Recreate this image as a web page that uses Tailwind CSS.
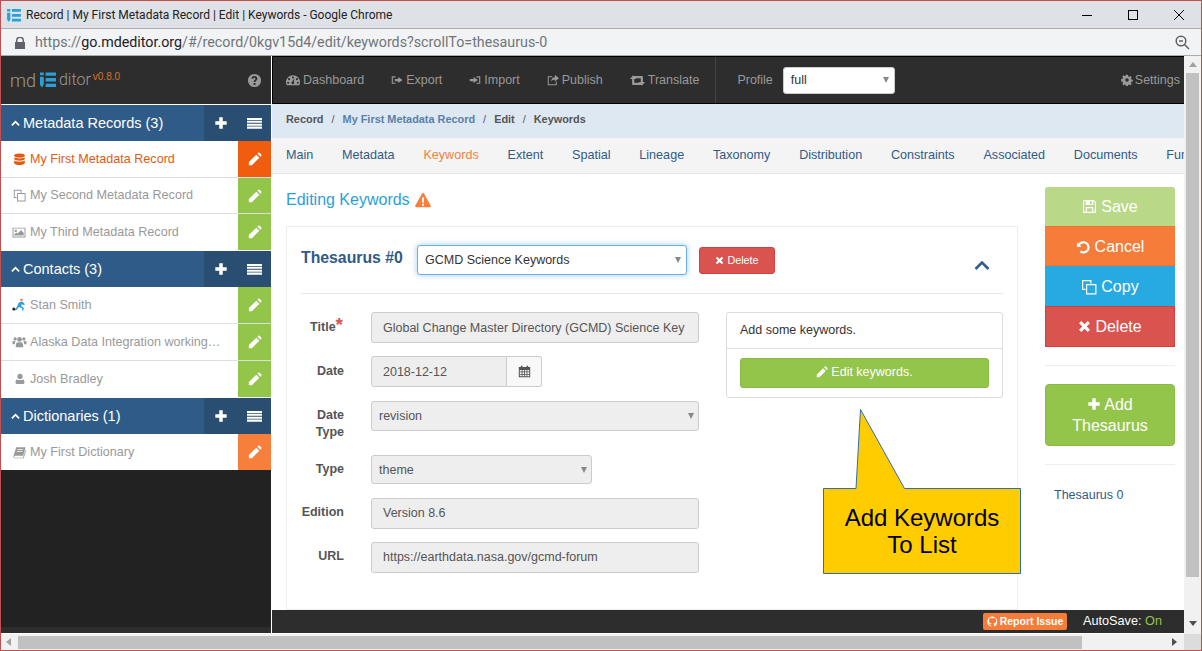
<!DOCTYPE html>
<html lang="en">
<head>
  <meta charset="UTF-8" />
  <title>Record | My First Metadata Record | Edit | Keywords</title>
  <script src="https://cdn.jsdelivr.net/npm/@tailwindcss/browser@4"></script>
</head>
<body class="bg-white font-['Liberation_Sans',sans-serif] overflow-hidden">
  <!-- icon sprites -->
  <svg class="hidden">
    <symbol id="i-pencil" viewBox="0 0 16 16"><path d="M1 11.500 9.500 3l3.500 3.500L4.500 15H1zM10.700 1.800l.8-.8a1.400 1.400 0 0 1 2 0l1.500 1.500a1.400 1.400 0 0 1 0 2l-.8.8z"/></symbol>
    <symbol id="i-plus" viewBox="0 0 16 16"><path d="M6 1.500h4V6h4.500v4H10v4.500H6V10H1.500V6H6z"/></symbol>
    <symbol id="i-list" viewBox="0 0 16 16"><path d="M0 2h16v2.200H0zM0 5.100h16v2.200H0zM0 8.200h16v2.200H0zM0 11.300h16v2.200H0z"/></symbol>
    <symbol id="i-db" viewBox="0 0 16 16"><ellipse cx="8" cy="3.200" rx="6.500" ry="2.500"/><path d="M1.500 5c1 2.400 12 2.400 13 0v2.500c-1 2.600-12 2.600-13 0zM1.500 9c1 2.400 12 2.400 13 0v3.500c-1 3-12 3-13 0z"/></symbol>
    <symbol id="i-copy" viewBox="0 0 16 16"><path fill-rule="evenodd" d="M1 1h9.500v3.500H9.300V2.200H2.200v7.600h2.300V11H1zM5 5h10.500v10.500H5zM6.200 6.200v8.100h8.100V6.200z"/></symbol>
    <symbol id="i-image" viewBox="0 0 16 16"><path fill-rule="evenodd" d="M0 2h16v12H0zM1.200 3.200v9.600h13.600V3.200zM4 4.500a1.500 1.500 0 1 1 0 3 1.500 1.500 0 0 1 0-3zM2.200 11.800V10l2.500-2 1.500 1.300L10.500 5l3.300 3.200v3.600z"/></symbol>
    <symbol id="i-users" viewBox="0 0 16 16"><circle cx="8" cy="5" r="2.700"/><circle cx="3" cy="4.500" r="1.900"/><circle cx="13" cy="4.500" r="1.900"/><path d="M4.500 9c1-1 6-1 7 0 .8.800.8 5 .8 5H3.700s0-4.200.8-5zM0 7.500c.5-.9 3-.9 3.700-.4-.8.700-1 2.600-1 3.400H0zM16 7.500c-.5-.9-3-.9-3.700-.4.800.7 1 2.600 1 3.400H16z"/></symbol>
    <symbol id="i-user" viewBox="0 0 16 16"><circle cx="8" cy="4.500" r="3.500"/><path d="M3.500 8.500c1.500 1.200 7.500 1.200 9 0 1 .5 1.500 2.500 1.500 4.500 0 1-.8 1.500-1.500 1.500h-9C2.800 14.500 2 14 2 13c0-2 .5-4 1.500-4.500z"/></symbol>
    <symbol id="i-book" viewBox="0 0 16 16"><path fill-rule="evenodd" d="M4 1.500h11.500L12.500 12H2.500a1.300 1.300 0 0 0-.2 2.500h10l3-10 .7 1-2.800 9.500H2.500C.8 15 .2 13.500.6 12zM5.500 4l-.3 1h7l.3-1zM4.900 6l-.3 1h7l.3-1z"/></symbol>
    <symbol id="i-gauge" viewBox="0 0 16 16"><path fill-rule="evenodd" d="M8 2.500a8 8 0 0 1 8 8c0 1.300-.3 2.400-.8 3.500H.8A8 8 0 0 1 0 10.500a8 8 0 0 1 8-8zM8 4a1.200 1.200 0 1 0 0 2.400A1.200 1.200 0 0 0 8 4zM3.500 5.800a1.200 1.200 0 1 0 0 2.400 1.200 1.200 0 0 0 0-2.400zM2.500 10a1.200 1.200 0 1 0 0 2.400 1.200 1.200 0 0 0 0-2.400zM13.500 10a1.200 1.200 0 1 0 0 2.400 1.200 1.200 0 0 0 0-2.400zM12.500 5.800a1.200 1.200 0 1 0 0 2.400 1.200 1.200 0 0 0 0-2.400zM9.700 6 7.300 9.800a1.500 1.500 0 1 0 1.600.4z"/></symbol>
    <symbol id="i-export" viewBox="0 0 16 16"><path d="M1 3h5v1.500H2.500v7H6V13H1zM9.500 4l6 4-6 4V9.500H5v-3h4.500z"/></symbol>
    <symbol id="i-import" viewBox="0 0 16 16"><path d="M10 3h5v10h-5v-1.500h3.500v-7H10zM6 4l6 4-6 4V9.500H1v-3h5z"/></symbol>
    <symbol id="i-share" viewBox="0 0 16 16"><path d="M1 3h6v1.300H2.300v9.400h9.400V10H13v5H1zM10.500 1 16 5.500 10.500 10V7.500c-2.500 0-4 .5-5 3 0-4 2-6 5-6.200z"/></symbol>
    <symbol id="i-retweet" viewBox="0 0 20 16"><path d="M4 1 8.500 6H5.700v5H13l2.200 3H3.700a.9.9 0 0 1-.9-.9V6H0zM16 15l-4.500-5h2.800V5H7L4.800 2h11.500a.9.900 0 0 1 .9.900V10H20z"/></symbol>
    <symbol id="i-cog" viewBox="0 0 16 16"><path fill-rule="evenodd" d="M6.800 1h2.400l.4 2 1.300.6 1.700-1.100 1.700 1.700-1.100 1.700.6 1.300 2 .4v2.400l-2 .4-.6 1.300 1.100 1.700-1.700 1.700-1.700-1.100-1.300.6-.4 2H6.800l-.4-2-1.300-.6-1.700 1.100-1.700-1.700 1.100-1.700-.6-1.300-2-.4V6.600l2-.4.6-1.300-1.100-1.700 1.700-1.700 1.700 1.100 1.300-.6zM8 5.500a2.400 2.400 0 1 0 0 4.800 2.400 2.400 0 0 0 0-4.800z"/></symbol>
    <symbol id="i-help" viewBox="0 0 16 16"><path fill-rule="evenodd" d="M8 1a7 7 0 1 1 0 14A7 7 0 0 1 8 1zM7 10.700v2h2v-2zM8 3.300C6.300 3.300 5 4.200 4.800 5.800l1.900.4c.1-.7.5-1.100 1.200-1.100.7 0 1.100.4 1.100.9 0 1.200-2 1.400-2 3.700h2c0-1.500 2.100-1.900 2.100-3.900 0-1.500-1.300-2.500-3.100-2.500z"/></symbol>
    <symbol id="i-warn" viewBox="0 0 16 16"><path fill-rule="evenodd" d="M8 1c.5 0 .8.200 1 .6l6.800 12.200c.4.700-.1 1.400-.8 1.400H1c-.7 0-1.200-.7-.8-1.400L7 1.600C7.200 1.200 7.500 1 8 1zM6.900 5.500l.3 5.200h1.600l.3-5.200zM7 11.700v2h2v-2z"/></symbol>
    <symbol id="i-save" viewBox="0 0 16 16"><path fill-rule="evenodd" d="M1 1h11.500L15 3.500V15H1zM2.300 2.300v11.400H4V8.500h8v5.200h1.700V4L12 2.300v4H4v-4zM8.500 2.500v3h2v-3zM5.300 9.800v3.900h5.400V9.800z"/></symbol>
    <symbol id="i-undo" viewBox="0 0 16 16"><path d="M1 2.500l1.500 1.500A6.600 6.600 0 1 1 3.800 13l1.500-1.700A4.300 4.300 0 1 0 4.200 5.600L6 7.500H1z"/></symbol>
    <symbol id="i-times" viewBox="0 0 16 16"><path d="M4 1.300 8 5.300l4-4L14.700 4l-4 4 4 4-2.700 2.700-4-4-4 4L1.300 12l4-4-4-4z"/></symbol>
    <symbol id="i-cal" viewBox="0 0 16 16"><path fill-rule="evenodd" d="M1 2.500h2.500V1h2v1.500h5V1h2v1.500H15V15H1zM2.200 6v2h2.300V6zM5.500 6v2h2V6zM8.500 6v2h2V6zM11.500 6v2h2.300V6zM2.200 9v2h2.300V9zM5.500 9v2h2V9zM8.500 9v2h2V9zM11.500 9v2h2.300V9zM2.200 12v1.800h2.300V12zM5.500 12v1.800h2V12zM8.500 12v1.800h2V12zM11.500 12v1.800h2.300V12z"/></symbol>
    <symbol id="i-github" viewBox="0 0 16 16"><path d="M8 .7a7.500 7.500 0 0 0-2.400 14.600c.4.100.5-.2.500-.4v-1.300c-2.100.4-2.600-.9-2.800-1.400-.1-.3-.5-1.100-.9-1.300-.3-.2-.7-.6 0-.6.700 0 1.100.6 1.300.9.700 1.300 1.900.9 2.400.7.100-.5.300-.9.500-1.100-1.800-.2-3.800-.9-3.800-4 0-.9.300-1.600.8-2.200-.1-.2-.3-1 .1-2.100 0 0 .7-.2 2.300.9a7.800 7.800 0 0 1 4.200 0c1.600-1.100 2.300-.9 2.300-.9.400 1.100.2 1.900.1 2.100.5.600.8 1.300.8 2.200 0 3.100-1.900 3.800-3.800 4 .3.300.6.800.6 1.500v2.200c0 .2.100.5.500.4A7.500 7.500 0 0 0 8 .7z"/></symbol>
    <symbol id="i-logo" viewBox="0 0 17 16"><path d="M0 0h4v3H0zM6 0h11v3.500H6zM0 4.500h4V13l-2 3-2-3zM6 6h11v3.500H6zM6 12h11v3.500H6z"/></symbol>
  </svg>

  <div class="relative w-[1202px] h-[651px] border border-[#c0504d] flex flex-col overflow-hidden">
    <!-- window title bar -->
    <div class="h-[28px] shrink-0 bg-[#dee1e6] border-b border-[#a9abae] flex items-center pl-[6px] pt-px text-[12px] text-[#222] font-['Roboto',sans-serif]">
      <svg class="w-[14px] h-[13px] text-[#2a9fd8] fill-current mr-[5px]"><use href="#i-logo"/></svg>
      <span>Record | My First Metadata Record | Edit | Keywords - Google Chrome</span>
      <div class="ml-auto flex items-center gap-[36px] pr-[17px]">
        <span class="w-[10px] h-px bg-black"></span>
        <span class="w-[10px] h-[10px] border border-black"></span>
        <svg class="w-[10px] h-[10px] stroke-black" viewBox="0 0 10 10"><path d="M0 0l10 10M10 0 0 10"/></svg>
      </div>
    </div>
    <!-- address bar -->
    <div class="h-[27px] shrink-0 bg-[#f1f3f4] border-b border-[#a9abae] flex items-center pl-[14px] pr-[11px] pt-px text-[14.270px] text-[#70757a] font-['Roboto',sans-serif]">
      <svg class="w-[10px] h-[12px] fill-[#5f6368] mr-[10px]" viewBox="0 0 10 12"><path d="M1 5V3.500a4 4 0 0 1 8 0V5h1v7H0V5zm1.500 0h5V3.500a2.500 2.500 0 0 0-5 0z"/></svg>
      <span>https://<span class="text-[#202124]">go.mdeditor.org</span>/#/record/0kgv15d4/edit/keywords?scrollTo=thesaurus-0</span>
      <svg class="ml-auto w-[15px] h-[15px] stroke-[#5f6368] fill-none stroke-[1.500]" viewBox="0 0 15 15"><circle cx="6" cy="6" r="4.800"/><path d="M4 6h4M9.500 9.500 14 14"/></svg>
    </div>

    <div class="flex-1 flex min-h-0">
      <div class="flex-1 flex flex-col min-w-0">
        <div class="flex-1 flex min-h-0">
          <!-- sidebar -->
          <aside class="w-[270px] shrink-0 mr-px flex flex-col bg-[#222] text-[12.600px]">
            <div class="h-[49px] bg-[#2d2d2d] border-b border-white flex items-center pl-[9px] pr-[9px] text-[#9a9a9a]">
              <span class="text-[18px] font-['Roboto',sans-serif] font-light">md</span>
              <svg class="w-[16px] h-[16px] text-[#2a9fd8] fill-current ml-[4px] mr-[3px]"><use href="#i-logo"/></svg>
              <span class="text-[16px] font-['Roboto',sans-serif] font-light">ditor</span>
              <span class="text-[10px] text-[#d9702e] self-start mt-[13px] ml-[2px]">v0.8.0</span>
              <svg class="ml-auto w-[15px] h-[15px] fill-[#999]"><use href="#i-help"/></svg>
            </div>

            <div class="h-[36px] bg-[#2f5b88] flex items-center text-white text-[14.500px]">
              <svg class="w-[9px] h-[9px] ml-[10px] mr-[3px] stroke-white fill-none stroke-[2]" viewBox="0 0 10 10"><path d="M1 7l4-4 4 4"/></svg>
              <span class="mt-[2px]">Metadata Records (3)</span>
              <div class="ml-auto w-[67px] h-full bg-[#2a4d72] flex items-center justify-between pl-[10px] pr-[9px]">
                <svg class="w-[14px] h-[14px] fill-white"><use href="#i-plus"/></svg>
                <svg class="w-[15px] h-[15px] fill-white"><use href="#i-list"/></svg>
              </div>
            </div>
            <div class="h-[37px] bg-white border-b border-[#ddd] flex items-center text-[#e25a12]">
              <svg class="w-[13px] h-[13px] ml-[12px] mr-[4px] fill-current"><use href="#i-db"/></svg>
              <span>My First Metadata Record</span>
              <div class="ml-auto w-[33px] h-full bg-[#f15d0f] flex items-center justify-center"><svg class="w-[14px] h-[14px] fill-white"><use href="#i-pencil"/></svg></div>
            </div>
            <div class="h-[36px] bg-white border-b border-[#ddd] flex items-center text-[#999]">
              <svg class="w-[13px] h-[13px] ml-[12px] mr-[4px] fill-current"><use href="#i-copy"/></svg>
              <span>My Second Metadata Record</span>
              <div class="ml-auto w-[33px] h-full bg-[#93c54b] flex items-center justify-center"><svg class="w-[14px] h-[14px] fill-white"><use href="#i-pencil"/></svg></div>
            </div>
            <div class="h-[37px] bg-white border-b border-white flex items-center text-[#999]">
              <svg class="w-[14px] h-[13px] ml-[11px] mr-[4px] fill-current"><use href="#i-image"/></svg>
              <span>My Third Metadata Record</span>
              <div class="ml-auto w-[33px] h-full bg-[#93c54b] flex items-center justify-center"><svg class="w-[14px] h-[14px] fill-white"><use href="#i-pencil"/></svg></div>
            </div>

            <div class="h-[36px] bg-[#2f5b88] flex items-center text-white text-[14.500px]">
              <svg class="w-[9px] h-[9px] ml-[10px] mr-[3px] stroke-white fill-none stroke-[2]" viewBox="0 0 10 10"><path d="M1 7l4-4 4 4"/></svg>
              <span class="mt-[2px]">Contacts (3)</span>
              <div class="ml-auto w-[67px] h-full bg-[#2a4d72] flex items-center justify-between pl-[10px] pr-[9px]">
                <svg class="w-[14px] h-[14px] fill-white"><use href="#i-plus"/></svg>
                <svg class="w-[15px] h-[15px] fill-white"><use href="#i-list"/></svg>
              </div>
            </div>
            <div class="h-[37px] bg-white border-b border-[#ddd] flex items-center text-[#999]">
              <svg class="w-[15px] h-[14px] ml-[11px] mr-[3px]" viewBox="0 0 15 14"><circle cx="9.500" cy="2" r="1.500" fill="#e59866"/><path d="M8 4l3 0 2 2.500-2 .5-1-1-1 2 3 2-1 3-1-.5.500-2L7 9l-3 3.500-1.500-.5L5 9l1.500-4z" fill="#2a9fd8"/><circle cx="1.800" cy="11" r="1.500" fill="#222"/></svg>
              <span>Stan Smith</span>
              <div class="ml-auto w-[33px] h-full bg-[#93c54b] flex items-center justify-center"><svg class="w-[14px] h-[14px] fill-white"><use href="#i-pencil"/></svg></div>
            </div>
            <div class="h-[37px] bg-white border-b border-[#ddd] flex items-center text-[#999]">
              <svg class="w-[15px] h-[14px] ml-[11px] mr-[3px] fill-current"><use href="#i-users"/></svg>
              <span>Alaska Data Integration working…</span>
              <div class="ml-auto w-[33px] h-full bg-[#93c54b] flex items-center justify-center"><svg class="w-[14px] h-[14px] fill-white"><use href="#i-pencil"/></svg></div>
            </div>
            <div class="h-[37px] bg-white border-b border-white flex items-center text-[#999]">
              <svg class="w-[12px] h-[12px] ml-[13px] mr-[5px] fill-current"><use href="#i-user"/></svg>
              <span class="-ml-px">Josh Bradley</span>
              <div class="ml-auto w-[33px] h-full bg-[#93c54b] flex items-center justify-center"><svg class="w-[14px] h-[14px] fill-white"><use href="#i-pencil"/></svg></div>
            </div>

            <div class="h-[36px] bg-[#2f5b88] flex items-center text-white text-[14.500px]">
              <svg class="w-[9px] h-[9px] ml-[10px] mr-[3px] stroke-white fill-none stroke-[2]" viewBox="0 0 10 10"><path d="M1 7l4-4 4 4"/></svg>
              <span class="mt-[2px]">Dictionaries (1)</span>
              <div class="ml-auto w-[67px] h-full bg-[#2a4d72] flex items-center justify-between pl-[10px] pr-[9px]">
                <svg class="w-[14px] h-[14px] fill-white"><use href="#i-plus"/></svg>
                <svg class="w-[15px] h-[15px] fill-white"><use href="#i-list"/></svg>
              </div>
            </div>
            <div class="h-[36px] bg-white flex items-center text-[#999]">
              <svg class="w-[13px] h-[13px] ml-[12px] mr-[4px] fill-current"><use href="#i-book"/></svg>
              <span>My First Dictionary</span>
              <div class="ml-auto w-[33px] h-full bg-[#f77f3c] flex items-center justify-center"><svg class="w-[14px] h-[14px] fill-white"><use href="#i-pencil"/></svg></div>
            </div>
            <div class="mt-auto h-[6px] bg-[#2d2d2d]"></div>
          </aside>

          <!-- main column -->
          <div class="flex-1 min-w-0 flex flex-col">
            <nav class="h-[48px] shrink-0 bg-[#2d2d2d] border-l border-y border-black flex items-center pl-[13px] pr-[4px] text-[12.500px] text-[#999]">
              <span class="flex items-center gap-[3px] mr-[27px]"><svg class="w-[14px] h-[14px] fill-current"><use href="#i-gauge"/></svg>Dashboard</span>
              <span class="flex items-center gap-[3px] mr-[27px]"><svg class="w-[12px] h-[12px] fill-current"><use href="#i-export"/></svg>Export</span>
              <span class="flex items-center gap-[3px] mr-[27px]"><svg class="w-[12px] h-[12px] fill-current"><use href="#i-import"/></svg>Import</span>
              <span class="flex items-center gap-[3px] mr-[27px]"><svg class="w-[12px] h-[12px] fill-current"><use href="#i-share"/></svg>Publish</span>
              <span class="flex items-center gap-[3px]"><svg class="w-[15px] h-[13px] fill-current"><use href="#i-retweet"/></svg>Translate</span>
              <span class="w-px h-full bg-[#444] ml-[16px] mr-[21px]"></span>
              <span>Profile</span>
              <div class="ml-[10px] w-[112px] h-[27px] bg-white rounded-[3px] border border-[#ccc] flex items-center pl-[7px] pr-[5px] text-[#333]">
                <span>full</span>
                <span class="ml-auto border-x-[3.500px] border-t-[6px] border-x-transparent border-t-[#888]"></span>
              </div>
              <span class="ml-auto flex items-center gap-[2px]"><svg class="w-[12px] h-[12px] fill-current"><use href="#i-cog"/></svg>Settings</span>
            </nav>
            <div class="h-[34px] shrink-0 bg-[#dee8f3] flex items-center pl-[14px] pb-[3px] text-[10.900px] font-bold text-[#555]">
              <span>Record</span><span class="mx-[8px] font-normal">/</span>
              <span class="text-[#5a7fa6]">My First Metadata Record</span><span class="mx-[8px] font-normal">/</span>
              <span>Edit</span><span class="mx-[8px] font-normal">/</span>
              <span>Keywords</span>
            </div>
            <div class="h-[36px] shrink-0 bg-[#f4f4f4] border-b border-[#e5e5e5] flex items-center gap-[28.800px] pl-[14px] text-[12.600px] text-[#2f5b88] overflow-hidden whitespace-nowrap">
              <span>Main</span><span>Metadata</span><span class="text-[#f77f3c]">Keywords</span><span>Extent</span><span>Spatial</span><span>Lineage</span><span>Taxonomy</span><span>Distribution</span><span>Constraints</span><span>Associated</span><span>Documents</span><span>Funding</span>
            </div>

            <div class="flex-1 min-h-0 flex pl-[14px] overflow-hidden">
              <div class="w-[732px] shrink-0 flex flex-col">
                <h2 class="flex items-center gap-[5px] h-[52px] shrink-0 text-[16px] text-[#2a9fd8]">Editing Keywords <svg class="w-[16px] h-[16px] fill-[#f77f3c]"><use href="#i-warn"/></svg></h2>
                <section class="flex-1 border border-[#eee] px-[14px] text-[12.500px]">
                  <div class="h-[67px] border-b border-[#e8e8e8] flex items-start pt-[18px]">
                    <span class="w-[116px] mt-px text-[15.800px] font-bold text-[#2f5b88]">Thesaurus #0</span>
                    <div class="w-[270px] h-[30px] bg-white rounded-[3px] border border-[#66afe9] shadow-[0_0_6px_rgba(102,175,233,0.6)] flex items-center pl-[7px] pr-[5px] text-[#333]">
                      <span>GCMD Science Keywords</span>
                      <span class="ml-auto border-x-[3.500px] border-t-[6px] border-x-transparent border-t-[#888]"></span>
                    </div>
                    <div class="ml-[12px] mt-[2px] w-[76px] h-[27px] rounded-[3px] bg-[#d9534f] border border-[#d43f3a] text-white text-[10.800px] flex items-center justify-center gap-[3px]">
                      <svg class="w-[9px] h-[9px] fill-white"><use href="#i-times"/></svg>Delete
                    </div>
                    <svg class="ml-auto mr-[13px] mt-[15px] w-[16px] h-[11px] stroke-[#2f5b88] fill-none stroke-[2.500]" viewBox="0 0 16 11"><path d="M1.500 9 8 2.500 14.500 9"/></svg>
                  </div>
                  <div class="flex pt-[18px]">
                    <div class="w-[398px] shrink-0 text-[#555]">
                      <div class="flex mb-[13px]">
                        <label class="w-[43px] pt-[6px] pr-px text-right font-bold">Title<span class="text-[#d9534f] text-[19px] leading-[0]">*</span></label>
                        <div class="ml-[27px] w-[328px] h-[31px] bg-[#eee] border border-[#ccc] rounded-[3px] flex items-center pl-[11px] pt-px overflow-hidden whitespace-nowrap">Global Change Master Directory (GCMD) Science Key</div>
                      </div>
                      <div class="flex mb-[14px]">
                        <label class="w-[43px] pt-[6px] text-right font-bold">Date</label>
                        <div class="ml-[27px] w-[136px] h-[31px] bg-[#eee] border border-[#ccc] rounded-l-[3px] flex items-center pl-[11px] pt-px">2018-12-12</div>
                        <div class="w-[35px] h-[31px] bg-[#eee]/40 border border-l-0 border-[#ccc] rounded-r-[3px] flex items-center justify-center"><svg class="w-[13px] h-[13px] fill-[#555]"><use href="#i-cal"/></svg></div>
                      </div>
                      <div class="flex mb-[14px]">
                        <label class="w-[43px] pt-[6px] text-right font-bold leading-[17px]">Date Type</label>
                        <div class="ml-[27px] w-[328px] h-[30px] bg-[#eee] border border-[#ccc] rounded-[3px] flex items-center pl-[7px] pr-[4px]">
                          <span>revision</span>
                          <span class="ml-auto border-x-[3.500px] border-t-[6px] border-x-transparent border-t-[#888]"></span>
                        </div>
                      </div>
                      <div class="flex mb-[14px]">
                        <label class="w-[43px] pt-[5px] text-right font-bold">Type</label>
                        <div class="ml-[27px] w-[221px] h-[29px] bg-[#eee] border border-[#ccc] rounded-[3px] flex items-center pl-[7px] pr-[4px] pt-px">
                          <span>theme</span>
                          <span class="ml-auto border-x-[3.500px] border-t-[6px] border-x-transparent border-t-[#888]"></span>
                        </div>
                      </div>
                      <div class="flex mb-[13px]">
                        <label class="w-[43px] pt-[5px] text-right font-bold">Edition</label>
                        <div class="ml-[27px] w-[328px] h-[31px] bg-[#eee] border border-[#ccc] rounded-[3px] flex items-center pl-[11px]">Version 8.6</div>
                      </div>
                      <div class="flex">
                        <label class="w-[43px] pt-[5px] text-right font-bold">URL</label>
                        <div class="ml-[27px] w-[328px] h-[31px] bg-[#eee] border border-[#ccc] rounded-[3px] flex items-center pl-[11px]">https://earthdata.nasa.gov/gcmd-forum</div>
                      </div>
                    </div>
                    <div class="ml-[27px] w-[277px] h-[86px] self-start border border-[#ddd] rounded-[3px] text-[#333]">
                      <div class="h-[36px] border-b border-[#ddd] flex items-center pl-[13px]">Add some keywords.</div>
                      <div class="mt-[9px] mx-[13px] h-[30px] rounded-[3px] bg-[#93c54b] border border-[#8ab945] text-white flex items-center justify-center gap-[3px] pb-[2px]">
                        <svg class="w-[12px] h-[12px] fill-white"><use href="#i-pencil"/></svg>Edit keywords.
                      </div>
                    </div>
                  </div>
                </section>
              </div>

              <!-- action column -->
              <div class="ml-[27px] w-[130px] shrink-0 pt-[13px]">
                <div class="text-[16px] text-white">
                  <div class="h-[39px] rounded-t-[3px] bg-[#b9d989] flex items-center justify-center gap-[4px]"><svg class="w-[15px] h-[15px] fill-white"><use href="#i-save"/></svg>Save</div>
                  <div class="h-[40px] bg-[#f67c3a] border-y border-[#f4722b] flex items-center justify-center gap-[4px] pt-[2px]"><svg class="w-[15px] h-[15px] fill-white"><use href="#i-undo"/></svg>Cancel</div>
                  <div class="h-[40px] bg-[#27aae1] flex items-center justify-center gap-[4px] pt-[2px]"><svg class="w-[16px] h-[16px] fill-white"><use href="#i-copy"/></svg>Copy</div>
                  <div class="h-[41px] bg-[#d9534f] border border-[#d43f3a] flex items-center justify-center gap-[4px]"><svg class="w-[13px] h-[13px] fill-white"><use href="#i-times"/></svg>Delete</div>
                </div>
                <div class="mt-[18px] mb-[18px] border-t border-[#eee]"></div>
                <div class="h-[62px] rounded-[4px] bg-[#93c54b] border border-[#8ab945] text-white text-[16px] leading-[21px] flex items-center justify-center text-center">
                  <span><svg class="inline w-[14px] h-[14px] fill-white align-[-1px] mr-[3px]"><use href="#i-plus"/></svg>Add<br />Thesaurus</span>
                </div>
                <div class="mt-[18px] border-t border-[#eee]"></div>
                <div class="mt-[21px] pl-[9px] text-[12.500px] text-[#2f5b88]">Thesaurus 0</div>
              </div>
            </div>

            <footer class="h-[23px] shrink-0 bg-[#2d2d2d] flex items-center justify-end pr-[22px] text-[12.700px]">
              <div class="w-[84px] h-[17px] rounded-[2px] bg-[#f67c3a] text-white text-[10.500px] font-bold flex items-center justify-center gap-[2px] mr-[16px]">
                <svg class="w-[11px] h-[11px] fill-white"><use href="#i-github"/></svg>Report Issue
              </div>
              <span class="text-white">AutoSave: <span class="text-[#93c54b]">On</span></span>
            </footer>
          </div>
        </div>
        <!-- horizontal scrollbar -->
        <div class="h-[17px] shrink-0 bg-[#f1f1f1] border-t border-white flex items-center pl-[5px] pr-[7px]">
          <span class="border-y-[4px] border-r-[5px] border-y-transparent border-r-[#a3a3a3]"></span>
          <span class="ml-[7px] w-[1064px] h-[13px] bg-[#c1c1c1]"></span>
          <span class="ml-auto border-y-[4px] border-l-[5px] border-y-transparent border-l-[#505050]"></span>
        </div>
      </div>
      <!-- vertical scrollbar -->
      <div class="w-[17px] shrink-0 bg-[#f1f1f1] flex flex-col items-center pt-[6px]">
        <span class="border-x-[4px] border-b-[5px] border-x-transparent border-b-[#a3a3a3]"></span>
        <span class="mt-[6px] w-[13px] h-[504px] bg-[#c1c1c1]"></span>
        <span class="mt-[44px] border-x-[4px] border-t-[5px] border-x-transparent border-t-[#505050]"></span>
        <span class="mt-auto w-full h-[16px] bg-[#dcdcdc]"></span>
      </div>
    </div>

    <!-- callout annotation -->
    <svg class="absolute left-[822px] top-[408px] w-[200px] h-[167px]" viewBox="0 0 200 167">
      <path d="M.5 79.500H33L37.500.5 81.500 79.500H197.500V164.500H.5z" fill="#ffcc00" stroke="#2e6db4"/>
    </svg>
    <div class="absolute left-[822px] top-[503px] w-[198px] text-center text-[24px] leading-[27px] text-black">Add Keywords<br />To List</div>
  </div>
</body>
</html>
